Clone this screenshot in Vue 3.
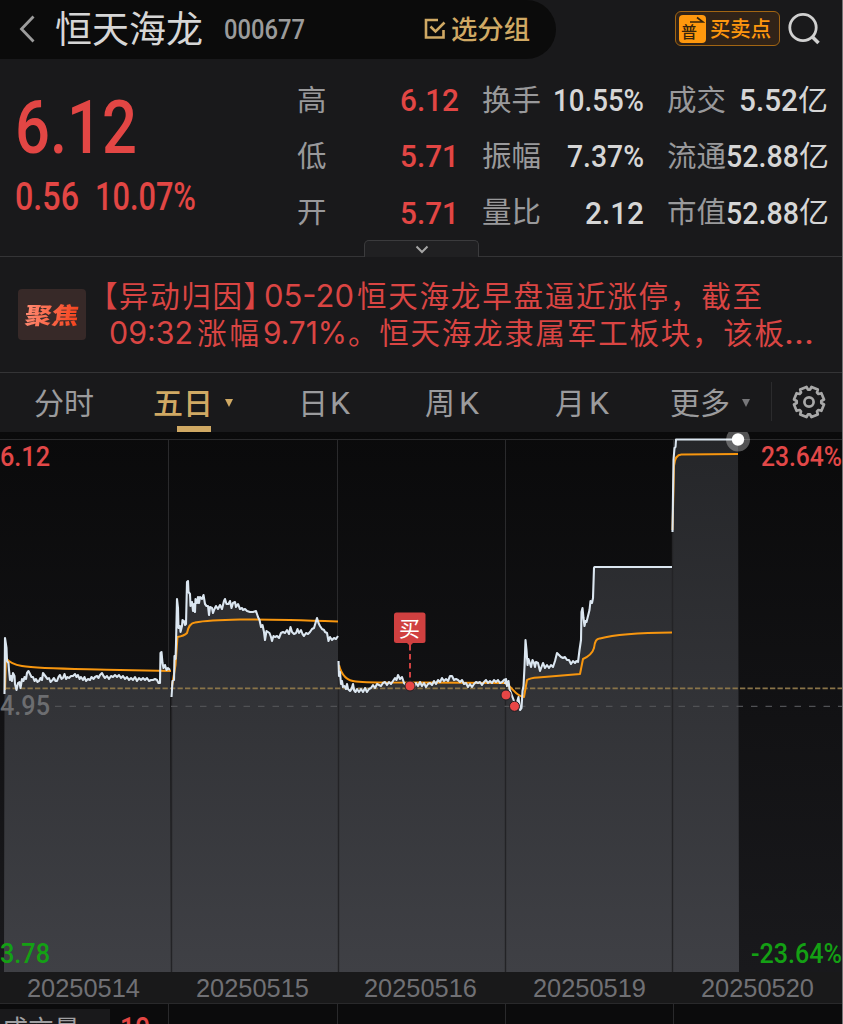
<template>
  <div class="app">
    <header class="top-bar">
      <div class="stock-pill">
        <svg class="back" width="16" height="28" viewBox="0 0 16 28">
          <path d="M14.5 1.5 L2.5 14 L14.5 26.5" fill="none" stroke="#9c9c9c" stroke-width="2.8" />
        </svg>
        <FitText class="stock-name cjk" text="恒天海龙" :width="148" :size="37" />
        <FitText class="stock-code" text="000677" :width="81" :size="27.5" />
        <div class="group-btn">
          <svg width="22" height="22" viewBox="0 0 22 22" fill="none" stroke="#d0a964" stroke-width="2.6">
            <path d="M14 2 H2 V19.5 H19.5 V12" />
            <path d="M6.5 8.5 L11.5 13.5 L20.5 4.5" />
          </svg>
          <FitText class="cjk medium" text="选分组" :width="79" :size="26" />
        </div>
      </div>
      <div class="top-actions">
        <div class="trade-btn">
          <div class="trade-icon">
            <svg width="16" height="8" viewBox="0 0 16 8">
              <path d="M1 6 H14 L8 1.5" fill="none" stroke="#33230d" stroke-width="1.6" />
            </svg>
            <span>普</span>
          </div>
          <FitText class="cjk medium" text="买卖点" :width="61" :size="21" />
        </div>
        <svg class="search" width="34" height="34" viewBox="0 0 34 34" fill="none" stroke="#d0d0d0" stroke-width="2.8">
          <circle cx="15" cy="15.5" r="13.2" />
          <path d="M24 24.5 L30.5 31" stroke-width="3.6" />
        </svg>
      </div>
    </header>

    <section class="quote">
      <div class="price-box">
        <FitText class="price" text="6.12" :width="122" :size="73.5" />
        <div class="change">
          <FitText text="0.56" :width="64" :size="38" />
          <FitText text="10.07%" :width="101" :size="38" />
        </div>
      </div>
      <div class="stats">
        <div v-for="row in stats" :key="row[0].label" class="stat-row">
          <div v-for="item in row" :key="item.label" class="stat">
            <FitText class="stat-label cjk" :text="item.label" :width="item.label.length * 29.5" :size="29" />
            <div class="stat-value" :class="{ up: item.up }">
              <FitText :text="item.value" :width="item.width" :size="32" />
              <FitText v-if="item.unit" class="unit cjk" :text="item.unit" :width="30" :size="29" />
            </div>
          </div>
        </div>
      </div>
      <div class="expand">
        <svg width="14" height="9" viewBox="0 0 14 9">
          <path d="M1.5 1.5 L7 7 L12.5 1.5" fill="none" stroke="#a5a5a5" stroke-width="2" />
        </svg>
      </div>
    </section>

    <section class="news">
      <div class="news-tag"><span>聚焦</span></div>
      <svg class="news-text" width="730" height="80" viewBox="0 0 730 80">
        <text
          v-for="seg in news"
          :key="seg.text"
          :x="seg.x"
          :y="seg.y"
          :textLength="seg.width"
          :lengthAdjust="seg.latin ? 'spacingAndGlyphs' : 'spacing'"
          :class="{ latin: seg.latin }"
        >{{ seg.text }}</text>
      </svg>
    </section>

    <nav class="tabs">
      <div
        v-for="tab in tabs"
        :key="tab.text"
        class="tab"
        :class="[tab.name, { active: tab.active }]"
      >
        <FitText class="cjk" :text="tab.text" :width="tab.text.length * 30" :size="30" />
        <FitText v-if="tab.k" class="tab-k" text="K" :width="20" :size="31.5" />
        <i v-if="tab.arrow" class="arrow"></i>
      </div>
      <div class="settings">
        <svg width="34" height="34" viewBox="0 0 34 34" fill="none" stroke="#a8a8a8" stroke-width="2.7" stroke-linejoin="round">
          <path :d="gearPath" />
          <circle cx="17" cy="17" r="4.6" />
        </svg>
      </div>
    </nav>

    <section class="chart">
      <svg width="842" height="540" viewBox="0 432 842 540">
        <defs>
          <linearGradient id="area" gradientUnits="userSpaceOnUse" x1="0" y1="440" x2="0" y2="972">
            <stop offset="0" stop-color="#252629" />
            <stop offset="0.5" stop-color="#323337" />
            <stop offset="1" stop-color="#3f4045" />
          </linearGradient>
        </defs>
        <path d="M0 439.5 H842" stroke="#2a2a2c" />
        <path d="M168.5 439 V972 M337.5 439 V972 M505.5 439 V972 M673.5 439 V972" stroke="#2a2a2c" />
        <path v-for="day in days" :key="'a' + day.start" :d="areaPath(day)" fill="url(#area)" />
        <path d="M171.5 697 V972 M338.5 662 V972 M505.5 684 V972 M672.5 532 V972" stroke="#232326" stroke-width="1.4" />
        <path d="M5 688.3 H842" stroke="#8a7448" stroke-width="1.7" stroke-dasharray="5.3 2.2" />
        <path d="M55 706.3 H842" stroke="#505154" stroke-width="1.2" stroke-dasharray="6.5 8" />
        <g fill="none" stroke-linejoin="round">
          <path v-for="day in days" :key="'v' + day.start" :d="day.avg" stroke="#f7960f" stroke-width="2" />
          <path v-for="day in days" :key="'p' + day.start" :d="'M' + day.price" stroke="#dbe6f0" stroke-width="2.1" />
        </g>
        <path d="M410 645 V683" stroke="#d04242" stroke-width="2" stroke-dasharray="5.5 3.5" />
        <path d="M406 642 H414 L410 646 Z" fill="#d04040" />
        <rect x="394" y="612.5" width="31.5" height="30.5" rx="2.5" fill="#d04040" />
        <text class="buy" x="399" y="636">买</text>
        <g fill="#e84646" stroke="#202024" stroke-width="1">
          <circle cx="410" cy="686" r="5" />
          <circle cx="506" cy="695" r="5" />
          <circle cx="514.5" cy="706.3" r="5" />
        </g>
        <circle cx="738" cy="439.5" r="12" fill="#fff" fill-opacity="0.3" />
        <circle cx="738" cy="439.5" r="6.2" fill="#fff" />
        <g class="axis">
          <text
            v-for="label in axis"
            :key="label.text"
            :x="label.x"
            :y="label.y"
            :fill="label.color"
            :textLength="label.width"
            lengthAdjust="spacingAndGlyphs"
          >{{ label.text }}</text>
        </g>
      </svg>
    </section>

    <div class="dates">
      <FitText v-for="date in dates" :key="date" :text="date" :width="113" :size="26" />
    </div>

    <section class="volume">
      <div class="volume-label">
        <FitText class="cjk" text="成交量" :width="78" :size="27" />
      </div>
      <FitText class="volume-value" text="10" :width="30" :size="32" />
      <i v-for="n in 4" :key="n" class="volume-grid"></i>
    </section>
  </div>
</template>

<script setup>
import { h } from 'vue';

// Text squeezed to a fixed width, the quote font is narrower than the system one
const FitText = (props) => {
  const height = Math.round(props.size * 1.2);
  return h('svg', { width: props.width, height, class: 'fit' }, [
    h('text', {
      x: 0,
      y: height / 2 + props.size * 0.357,
      'font-size': props.size,
      textLength: props.width,
      lengthAdjust: 'spacingAndGlyphs',
      fill: 'currentColor',
    }, props.text),
  ]);
};
FitText.props = ['text', 'width', 'size'];

const stats = [
  [
    { label: '高', value: '6.12', width: 59, up: true },
    { label: '换手', value: '10.55%', width: 91 },
    { label: '成交', value: '5.52', width: 59, unit: '亿' },
  ],
  [
    { label: '低', value: '5.71', width: 59, up: true },
    { label: '振幅', value: '7.37%', width: 77 },
    { label: '流通', value: '52.88', width: 73, unit: '亿' },
  ],
  [
    { label: '开', value: '5.71', width: 59, up: true },
    { label: '量比', value: '2.12', width: 59 },
    { label: '市值', value: '52.88', width: 73, unit: '亿' },
  ],
];

const news = [
  { text: '【异动归因】', x: -15, y: 32, width: 185 },
  { text: '05-20', x: 161, y: 32, width: 90, latin: true },
  { text: '恒天海龙早盘逼近涨停，截至', x: 254, y: 32, width: 405 },
  { text: '09:32', x: 6, y: 69, width: 84, latin: true },
  { text: '涨幅', x: 94, y: 69, width: 62 },
  { text: '9.71%', x: 160, y: 69, width: 84, latin: true },
  { text: '。恒天海龙隶属军工板块，该板', x: 245, y: 69, width: 436 },
  { text: '...', x: 681, y: 69, width: 30, latin: true },
];

const tabs = [
  { name: 'minute', text: '分时' },
  { name: 'five', text: '五日', arrow: true, active: true },
  { name: 'day', text: '日', k: true },
  { name: 'week', text: '周', k: true },
  { name: 'month', text: '月', k: true },
  { name: 'more', text: '更多', arrow: true },
];

const gearPath = (() => {
  const points = [];
  for (let i = 0; i < 8; i++) {
    const base = i * 45 + 22.5;
    [[-13, 15.2], [13, 15.2], [18, 12.3], [27, 12.3]].forEach(([deg, r]) => {
      const a = ((base + deg) * Math.PI) / 180;
      points.push(`${(17 + r * Math.cos(a)).toFixed(1)} ${(17 + r * Math.sin(a)).toFixed(1)}`);
    });
  }
  return `M${points.join('L')}Z`;
})();

const days = [
  {
    start: 4,
    end: 171,
    price: '4.5 694 5 638 6.5 648 7 661 8.5 663 9 670 10 680 11 676 12 681 13 673 14.5 676 15 684 16.5 690 18 683 19.5 682 20.5 688 22 679 23.5 681 24.5 677 26 679 27 673 28.5 671 30 674 31.5 677 33 677 34.5 681 36 679 37.5 682 39 681 40.5 678 42 680 43 673 44.5 675 46 677 47.5 679 49 678 50.5 682 52.5 680 54 678 55.5 681 57 681 58.5 677 60 675 61.5 679 63 678 64.5 674 66 679 67.5 677 69 678 71 676 73 676 75 674 76.5 677 78 675 79.5 679 81 677 83 680 84.5 677 86 681 88 679 90 680 91.5 677 93.5 679 95 677 97 676 98.5 678 100 675 102 673 103.5 676 105 678 107 676 109 679 111 676 113 677 115 675 117 677 119 675 121 678 123 676 125 679 127 677 129 680 131 678 133 680 135 677 137 681 139 678 141 680 143 678 145 680 147 678 149 681 151 680 153 680 155 679 157 680 158.5 683 160 683 160.5 653 161.5 652 162.5 663 163.5 668 165 665 166.5 670 168 668 170 670',
    avg: 'M5 690 L6 658 C9 662 15 665 22 666 C40 669 80 668.8 120 670 L171 671',
  },
  {
    start: 171,
    end: 338,
    price: '171.5 697 172.5 681 174 680 174.5 656 175.5 659 176 644 177 599 178 608 178.5 628 180 626 180.5 632 182 626 182.5 620 184 621 185 625 186 624 187 582 188 581 188.5 592 190 594 190.5 606 192 602 193 611 194 604 195 612 195.5 599 197 603 198 597 199 603 200 597 202 599 203.5 595 205 604 206.5 606 208 606 209 615 210 607 212 608 213 613 214.5 609 216 606 218 609 220 605 222 609 224 601 225 599 226.5 604 228.5 604 230 601 231.5 608 233 603 235 602 236 607 238 604 240 609 242 608 243 610 245 609 247 611 250 612 253 612 256 611 258 617 259.5 620 261 627 262.5 625 264 632 265 640 266.5 631 268 632 269.5 633 271 637 272 641 273.5 636 275 637 277 636 279 638 281 633 283 632 285 633 287 630 289 634 290.5 627 292 632 294 634 296 633 297.5 629 299 633 301 630 302.5 634 304 636 306 633 308 634 310 632 312 629 314 628 315.5 623 317 618 318.5 623 320 626 322 629 324 630 325 632 327 633 328.5 641 330 637 332 640 334 638 336 639 338 636',
    avg: 'M172 686 L175.5 665 L177.5 637 Q184 636 187 633 Q189 623 195 622.5 Q208 620 240 619.5 Q270 619 338 621.5',
  },
  {
    start: 338,
    end: 505,
    price: '338.5 661 339 676 340 672 341 684 342 681 343 687 344.5 686 346 689 347 684 348 689 350 691 351.5 689 353 684 354 690 355.5 692 357 689 359 692 361 689 363 692 365 688 367 692 369 689 371 688 373 685 375 688 377 684 379 685 381 686 383 683 385 682 387 685 389 682 391 684 393 681 395 678 396.5 680 398 675 400 679 402 677 404 683 406 685 409 685 412 685 414 687 416 683 418 686 420 682 422 686 424 683 426 687 428 684 430 683 432 685 434 681 436 684 438 680 440 682 442 678 444 681 446 679 448 681 450 676 452 676 454 680 456 679 458 680 460 682 462 680 464 684 466 683 468 687 470 684 472 687 474 684 476 682 478 683 480 682 482 685 484 682 486 680 488 683 490 681 492 683 494 680 496 682 498 680 500 683 502 682 505 679',
    avg: 'M339 665 C341 673 346 681 356 681.5 Q370 683 420 682.5 L505 683',
  },
  {
    start: 505,
    end: 672,
    price: '505 684 506 679 507 686 508.5 681 509.5 689 511 693 512.5 697 514 701 515.5 706 516.5 704 518.5 697 520 710 521.5 708 522.5 691 523.5 686 524.5 667 525.5 640 526.5 650 527.5 665 528.5 659 529.5 662 531 667 532.5 660 534 663 535 667 536 662 538 663 540 671 541.5 667 543 663 545 668 547 665 549 668 551 665 553 667 555 661 557 653 559 655 561 657 563 658 565 657 567 660 569 660 571 664 573 661 575 663 576.5 661 578 662 579.5 650 581 640 581.5 612 582.5 608 583.5 618 584.5 626 585.5 621 586.5 622 588 616 589.5 610 590.5 601 592 603 593 598 594 568 594.5 567 672 567',
    avg: 'M505 683 C513 687 515 696 524 697 L527 680 Q530 678 538 677.5 L580 674 L583 659 Q592 655 594 648 Q595 638 600 638.5 Q620 633 672 632.5',
  },
  {
    start: 672,
    end: 739,
    price: '672.5 532 673.5 460 674.5 448 675.5 447 676 439.5 738 439.5',
    avg: 'M672.5 530 L674 466 Q675 454 682 454.5 L738 454',
  },
];

const areaPath = (day) => `M${day.start} 972 L${day.price} L${day.end} 972 Z`;

const axis = [
  { text: '6.12', x: 0, y: 466, width: 50, color: '#e24848' },
  { text: '23.64%', x: 761, y: 466, width: 81, color: '#e24848' },
  { text: '4.95', x: 0, y: 715, width: 50, color: '#6c6d70' },
  { text: '3.78', x: 0, y: 963, width: 50, color: '#14a014' },
  { text: '-23.64%', x: 751, y: 963, width: 91, color: '#14a014' },
];

const dates = ['20250514', '20250515', '20250516', '20250519', '20250520'];
</script>

<style>
body {
  margin: 0;
  background: #19191b;
}
</style>

<style scoped>
.app {
  box-sizing: border-box;
  width: 843px;
  height: 1024px;
  overflow: hidden;
  border-right: 1px solid #747476;
  background: #19191b;
  color: #d6d6d6;
  font-family: Roboto, "Noto Sans CJK SC", sans-serif;
  font-weight: 500;
}

.fit {
  display: block;
  flex: none;
  overflow: visible;
}

.cjk {
  font-family: "Noto Sans CJK SC", sans-serif;
  font-weight: 400;
}

.cjk.medium {
  font-weight: 500;
}

.top-bar {
  display: flex;
  justify-content: space-between;
  height: 59px;
}

.stock-pill {
  display: flex;
  align-items: center;
  box-sizing: border-box;
  width: 556px;
  height: 59px;
  padding-left: 19px;
  border-radius: 0 30px 30px 0;
  background: #0b0b0b;
}

.back {
  margin-top: -2px;
}

.stock-name {
  margin-left: 20px;
}

.stock-code {
  margin-left: 21px;
  color: #9b9b9b;
}

.group-btn {
  display: flex;
  align-items: center;
  gap: 5px;
  margin-left: 119px;
  color: #d0a964;
}

.group-btn svg:first-child {
  margin-top: -2px;
}

.top-actions {
  display: flex;
  align-items: center;
  gap: 8px;
  height: 57px;
  padding-right: 20px;
}

.trade-btn {
  display: flex;
  align-items: center;
  gap: 4px;
  box-sizing: border-box;
  width: 105px;
  height: 35px;
  padding-left: 3px;
  border: 1.5px solid #a26513;
  border-radius: 6px;
  background: #302318;
  color: #ff970e;
}

.trade-icon {
  display: flex;
  flex-direction: column;
  width: 27px;
  height: 28px;
  border-radius: 4px;
  background: #ff980d;
  color: #33230d;
}

.trade-icon svg {
  margin: 1px 0 0 10px;
}

.trade-icon span {
  margin: 1px 0 0 2px;
  font-size: 16px;
  line-height: 16px;
}

.quote {
  position: relative;
  display: flex;
  box-sizing: border-box;
  height: 198px;
  border-bottom: 1px solid #343436;
}

.price-box {
  box-sizing: border-box;
  width: 281px;
  padding: 24px 0 0 15px;
  color: #e24644;
}

.change {
  display: flex;
  gap: 16px;
  margin-top: 2px;
}

.stats {
  padding: 13px 0 0 16px;
}

.stat-row {
  display: grid;
  grid-template-columns: 162px 162px 161px;
  column-gap: 23px;
  height: 56.3px;
}

.stat {
  display: flex;
  align-items: center;
  justify-content: space-between;
}

.stat-label {
  color: #99999b;
}

.stat-value {
  display: flex;
  align-items: center;
}

.stat-value.up {
  color: #e24644;
}

.expand {
  position: absolute;
  bottom: -1px;
  left: 364px;
  display: flex;
  align-items: center;
  justify-content: center;
  box-sizing: border-box;
  width: 115px;
  height: 17px;
  border: 1px solid #3b3b3d;
  border-bottom: 0;
  border-radius: 5px 5px 0 0;
  background: #202022;
}

.news {
  display: flex;
  align-items: center;
  box-sizing: border-box;
  height: 116px;
  padding-left: 18px;
  border-bottom: 1px solid #343436;
}

.news-tag {
  display: flex;
  flex: none;
  align-items: center;
  justify-content: center;
  width: 68px;
  height: 51px;
  border-radius: 4px;
  background: #372928;
}

.news-tag span {
  background: linear-gradient(90deg, #ff8a72, #f4421c);
  background-clip: text;
  color: transparent;
  font-family: "Noto Sans CJK SC", sans-serif;
  font-size: 27px;
  font-weight: 900;
  line-height: 32px;
  transform: scaleY(0.86) skewX(-7deg);
}

.news-text {
  margin-left: 17px;
  overflow: visible;
  fill: #da4543;
  font-family: "Noto Sans CJK SC", sans-serif;
  font-size: 29.5px;
  font-weight: 400;
}

.news-text .latin {
  font-family: Inter, sans-serif;
  font-size: 30.5px;
}

.tabs {
  display: flex;
  height: 59px;
  color: #9b9b9d;
}

.tab {
  position: relative;
  display: flex;
  align-items: center;
  box-sizing: border-box;
  height: 59px;
}

.tab .tab-k {
  margin-left: 2px;
  font-weight: 400;
}

.minute {
  width: 153px;
  padding-left: 34px;
}

.five {
  width: 145px;
}

.day {
  width: 127px;
}

.week {
  width: 130px;
}

.week .tab-k {
  margin-left: 4px;
}

.month {
  width: 115px;
}

.month .tab-k {
  margin-left: 4px;
}

.more {
  width: 101px;
}

.active {
  color: #d0a964;
}

.active .cjk {
  font-weight: 500;
}

.active::after {
  content: "";
  position: absolute;
  bottom: 0;
  left: 24px;
  width: 34px;
  height: 6px;
  background: #d0a964;
}

.arrow {
  margin-left: 12px;
  border-top: 8px solid #d0a964;
  border-right: 4.5px solid transparent;
  border-left: 4.5px solid transparent;
}

.more .arrow {
  border-top-color: #77777a;
}

.settings {
  display: flex;
  align-items: center;
  height: 39px;
  margin-top: 9px;
  padding-left: 20px;
  border-left: 1px solid #2b2b2d;
}

.chart {
  height: 540px;
  background: linear-gradient(#0a0a0b, #19191c);
}

.chart svg {
  display: block;
}

.buy {
  fill: #fff;
  font-family: "Noto Sans CJK SC", sans-serif;
  font-size: 21px;
  font-weight: 400;
}

.axis {
  font-size: 28px;
  font-weight: 500;
}

.dates {
  display: flex;
  align-items: center;
  gap: 55.5px;
  box-sizing: border-box;
  height: 31px;
  padding-left: 27px;
  background: #19191a;
  color: #707074;
  font-family: "Liberation Sans", sans-serif;
  font-weight: 400;
}

.volume {
  position: relative;
  display: flex;
  height: 21px;
  border-top: 1px solid #29292b;
  background: #0b0b0c;
}

.volume-label {
  width: 110px;
  height: 16px;
  margin-top: 5px;
  padding: 5px 0 0 2px;
  box-sizing: border-box;
  background: #19191b;
  color: #a0a0a2;
}

.volume-value {
  margin: 5px 0 0 10px;
  color: #e24644;
}

.volume-grid {
  position: absolute;
  top: 0;
  left: 168px;
  width: 1px;
  height: 21px;
  background: #29292b;
}

.volume-grid:nth-of-type(2) {
  left: 337px;
}

.volume-grid:nth-of-type(3) {
  left: 505px;
}

.volume-grid:nth-of-type(4) {
  left: 673px;
}
</style>
